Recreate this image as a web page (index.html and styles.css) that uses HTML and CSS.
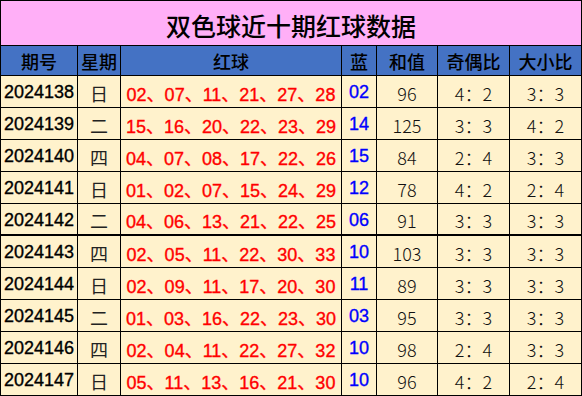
FILE: index.html
```html
<!DOCTYPE html>
<html lang="zh">
<head>
<meta charset="utf-8">
<link rel="stylesheet" href="styles.css">
</head>
<body>
<div class="sheet">
  <div class="title">双色球近十期红球数据</div>
  <div class="row head">
    <div class="c">期号</div><div class="c">星期</div><div class="c">红球</div><div class="c">蓝</div><div class="c">和值</div><div class="c">奇偶比</div><div class="c">大小比</div>
  </div>
  <div class="row"><div class="c per">2024138</div><div class="c wk">日</div><div class="c red">02、07、11、21、27、28</div><div class="c blue">02</div><div class="c num">96</div><div class="c num">4：2</div><div class="c num">3：3</div></div>
  <div class="row"><div class="c per">2024139</div><div class="c wk">二</div><div class="c red">15、16、20、22、23、29</div><div class="c blue">14</div><div class="c num">125</div><div class="c num">3：3</div><div class="c num">4：2</div></div>
  <div class="row"><div class="c per">2024140</div><div class="c wk">四</div><div class="c red">04、07、08、17、22、26</div><div class="c blue">15</div><div class="c num">84</div><div class="c num">2：4</div><div class="c num">3：3</div></div>
  <div class="row"><div class="c per">2024141</div><div class="c wk">日</div><div class="c red">01、02、07、15、24、29</div><div class="c blue">12</div><div class="c num">78</div><div class="c num">4：2</div><div class="c num">2：4</div></div>
  <div class="row split"><div class="c per">2024142</div><div class="c wk">二</div><div class="c red">04、06、13、21、22、25</div><div class="c blue">06</div><div class="c num">91</div><div class="c num">3：3</div><div class="c num">3：3</div></div>
  <div class="row"><div class="c per">2024143</div><div class="c wk">四</div><div class="c red">02、05、11、22、30、33</div><div class="c blue">10</div><div class="c num">103</div><div class="c num">3：3</div><div class="c num">3：3</div></div>
  <div class="row"><div class="c per">2024144</div><div class="c wk">日</div><div class="c red">02、09、11、17、20、30</div><div class="c blue">11</div><div class="c num">89</div><div class="c num">3：3</div><div class="c num">3：3</div></div>
  <div class="row"><div class="c per">2024145</div><div class="c wk">二</div><div class="c red">01、03、16、22、23、30</div><div class="c blue">03</div><div class="c num">95</div><div class="c num">3：3</div><div class="c num">3：3</div></div>
  <div class="row"><div class="c per">2024146</div><div class="c wk">四</div><div class="c red">02、04、11、22、27、32</div><div class="c blue">10</div><div class="c num">98</div><div class="c num">2：4</div><div class="c num">3：3</div></div>
  <div class="row"><div class="c per">2024147</div><div class="c wk">日</div><div class="c red">05、11、13、16、21、30</div><div class="c blue">10</div><div class="c num">96</div><div class="c num">4：2</div><div class="c num">2：4</div></div>
</div>
</body>
</html>
```

FILE: styles.css
```css
html, body {
  margin: 0;
  padding: 0;
  background: #ffffff;
}
.sheet {
  width: 582px;
  height: 396px;
  box-sizing: border-box;
  background: #000000;
  padding: 1px;
  display: grid;
  grid-template-columns: 76px 42px 220px 34px 60px 71px 71px;
  grid-template-rows: 44px 29px repeat(10, 31px);
  gap: 1px;
  font-family: "Liberation Sans", "Noto Sans CJK SC", sans-serif;
}
.title {
  grid-column: 1 / -1;
  background: #ffaff7;
  display: flex;
  align-items: center;
  justify-content: center;
  padding-top: 4px;
  box-sizing: border-box;
  font-family: "Noto Sans CJK SC", sans-serif;
  font-size: 25px;
  font-weight: 500;
  color: #000;
}
.row {
  display: contents;
}
.c {
  background: #fff2cc;
  display: flex;
  align-items: center;
  justify-content: center;
  padding-top: 2px;
  box-sizing: border-box;
  font-size: 18px;
  color: #000;
  white-space: nowrap;
  overflow: hidden;
}
.head .c {
  background: #4472c4;
  padding-top: 0;
  font-family: "Noto Sans CJK SC", sans-serif;
  font-weight: 500;
  font-size: 18px;
}
.split .c {
  border-bottom: 1px solid #000;
}
.per {
  font-weight: normal;
  -webkit-text-stroke: 0.35px #000;
}
.wk {
  font-family: "Noto Sans CJK SC", sans-serif;
  font-weight: 400;
  color: #222;
}
.red {
  color: #ff0000;
  -webkit-text-stroke: 0.35px #ff0000;
  font-family: "Liberation Sans", "Noto Sans CJK SC", sans-serif;
}
.blue {
  color: #0000ff;
  -webkit-text-stroke: 0.35px #0000ff;
}
.num {
  font-family: "Noto Sans CJK SC", sans-serif;
  font-weight: 300;
  color: #111;
}
```
